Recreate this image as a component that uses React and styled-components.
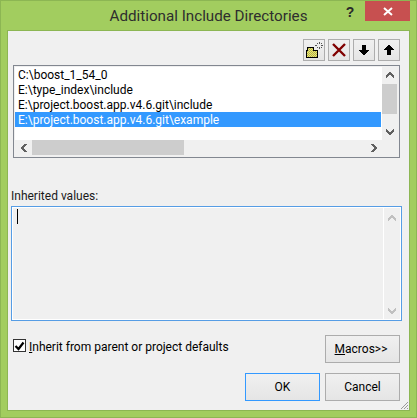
import React from "react";
import styled, { createGlobalStyle } from "styled-components";

const Global = createGlobalStyle`
  html, body { margin: 0; padding: 0; background: #a2cd5f; }
  * { box-sizing: border-box; }
`;

const Win = styled.div`
  width: 417px; height: 418px; background: #a2cd5f;
  border: 1px solid #8cb653;
  display: flex; flex-direction: column;
  font-family: Roboto, "Open Sans", sans-serif;
  font-size: 12px; color: #000;
`;
const TitleBar = styled.div`
  height: 29px; flex: none; position: relative;
  display: flex; justify-content: center; align-items: center;
`;
const Title = styled.div`
  font-size: 15.2px; color: #2e2e2e; padding-top: 1px;
`;
const WindowControls = styled.div`
  position: absolute; top: 0; right: 6px; height: 20px;
  display: flex; align-items: flex-start;
`;
const Help = styled.div`
  width: 30px; height: 20px; font: bold 14px/22px "Liberation Sans", sans-serif;
  color: #2a2a2a; text-align: center;
`;
const Close = styled.div`
  width: 45px; height: 20px; background: #c75050;
  display: flex; align-items: center; justify-content: center;
`;
const Client = styled.div`
  margin: 0 6px 6px 6px; flex: 1; min-height: 0;
  background: #f0f0f0; border: 1px solid #8cb653;
  padding: 8px 9px 0 5px;
  display: flex; flex-direction: column; position: relative;
`;
const Toolbar = styled.div`
  display: flex; justify-content: flex-end; gap: 3px; height: 22px; flex: none;
`;
const ToolBtn = styled.div`
  width: 22px; height: 22px; border: 1px solid #adadad;
  background: linear-gradient(#f0f0f0, #e5e5e5);
  display: flex; align-items: center; justify-content: center;
`;
const List = styled.div`
  margin-top: 4px; height: 93px; border: 1px solid #828790; flex: none;
  display: grid; grid-template-columns: 1fr 15px; grid-template-rows: 73px 16px;
  padding: 1px 2px 1px 1px; background: #f0f0f0;
`;
const Rows = styled.div`
  background: #fff; padding-right: 1px; overflow: hidden; grid-column: 1; grid-row: 1;
`;
const Row = styled.div`
  height: 15px; line-height: 17px; padding-left: 3px; white-space: nowrap;
  background: ${p => (p.$sel ? "#3399ff" : "transparent")};
  color: ${p => (p.$sel ? "#fff" : "#000")};
`;
const VScroll = styled.div`
  grid-column: 2; grid-row: 1; background: #f0f0f0; width: 15px;
  display: flex; flex-direction: column; align-items: center; justify-content: space-between;
  position: relative;
`;
const VThumb = styled.div`
  position: absolute; left: 0; top: 17px; width: 15px; height: 30px; background: #cdcdcd;
`;
const Arrow = styled.div`
  height: 16px; width: 17px; display: flex; align-items: center; justify-content: center;
`;
const HScroll = styled.div`
  grid-column: 1; grid-row: 2; display: flex; align-items: center; justify-content: space-between;
  position: relative;
`;
const HThumb = styled.div`
  position: absolute; left: 17px; top: 0; height: 15px; width: 152px; background: #cdcdcd;
`;
const Label = styled.div`
  margin-top: 29px; height: 16px; line-height: 18px; flex: none; margin-left: -2px; color: #1a1a1a;
`;
const Inherited = styled.div`
  margin-top: 3px; margin-left: -2px; height: 115px; width: 391px; flex: none;
  border: 1px solid #569de5; background: #f0f0f0; position: relative;
  box-shadow: inset 0 1px 0 #fff, inset 1px 0 0 #fff, inset 0 -1px 0 #fff, inset -1px 0 0 #fff;
  display: flex; justify-content: flex-end;
`;
const Caret = styled.div`
  position: absolute; left: 5px; top: 2px; width: 1px; height: 15px; background: #000;
`;
const DisabledBar = styled.div`
  width: 17px; margin: 1px; border-left: 1px solid #fff;
  display: flex; flex-direction: column; justify-content: space-between; align-items: center;
  padding: 7px 0 5px;
`;
const MacroRow = styled.div`
  margin-top: 14px; display: flex; justify-content: space-between; align-items: flex-start;
  height: 28px; flex: none;
`;
const CheckLabel = styled.label`
  display: flex; align-items: center; gap: 3px; height: 13px; margin-top: 4px;
`;
const CheckBox = styled.span`
  width: 13px; height: 13px; border: 1px solid #333; background: #fff;
  display: flex; align-items: center; justify-content: center;
`;
const CheckText = styled.span`
  padding-top: 2px; line-height: 14px;
`;
const Key = styled.span`
  text-decoration: underline; text-underline-offset: 1px;
`;
const Button = styled.div`
  width: 75px; height: 28px; flex: none;
  border: 1px solid ${p => (p.$def ? "#3399ff" : "#acacac")};
  background: linear-gradient(#f0f0f0, #e5e5e5);
  display: flex; align-items: center; justify-content: center;
  padding-right: ${p => p.$nudge || 0}px;
`;
const Footer = styled.div`
  margin-top: 10px; display: flex; justify-content: flex-end; gap: 5px; flex: none;
`;
const Grip = styled.svg`
  position: absolute; right: 0; bottom: 0;
`;

const Chevron = ({ rot = 0, color = "#606060" }) => (
  <svg width="8" height="6" viewBox="0 0 8 6" style={{ transform: `rotate(${rot}deg)` }} shapeRendering="crispEdges">
    <path d="M3 0h2v1h1v1h1v1h1v3H7V5H6V4H5V3H3v1H2v1H1v1H0V3h1V2h1V1h1z" fill={color} />
  </svg>
);

export default function App() {
  return (
    <>
      <Global />
      <Win>
        <TitleBar>
          <Title>Additional Include Directories</Title>
          <WindowControls>
            <Help>?</Help>
            <Close>
              <svg width="10" height="9" viewBox="0 0 10 9">
                <path d="M1 1l8 7M9 1L1 8" stroke="#fff" strokeWidth="2" />
              </svg>
            </Close>
          </WindowControls>
        </TitleBar>
        <Client>
          <Toolbar>
            <ToolBtn>
              <svg width="18" height="18" viewBox="0 0 18 18" shapeRendering="crispEdges">
                <defs>
                  <pattern id="dither" width="2" height="2" patternUnits="userSpaceOnUse">
                    <rect width="2" height="2" fill="#f6f060" />
                    <rect width="1" height="1" fill="#a8a860" />
                    <rect x="1" y="1" width="1" height="1" fill="#a8a860" />
                  </pattern>
                </defs>
                <path d="M1.500 9.500h1v-3h6v3h3.500v6.500h-10.500z" fill="url(#dither)" stroke="#000" />
                <path d="M14 1h1v2h-1zM14 6h1v2h-1zM10 4h2v1h-2zM16 4h2v1h-2zM12 2h1v1h-1zM16 2h1v1h-1zM12 6h1v1h-1zM16 6h1v1h-1z" fill="#555" />
              </svg>
            </ToolBtn>
            <ToolBtn>
              <svg width="14" height="14" viewBox="0 0 14 14">
                <path d="M1 1l12 12M13 1L1 13" stroke="#800000" strokeWidth="2.400" />
              </svg>
            </ToolBtn>
            <ToolBtn>
              <svg width="10" height="10" viewBox="0 0 10 10" shapeRendering="crispEdges">
                <path d="M3 0h4v5h3v1H9v1H8v1H7v1H6v1H4V9H3V8H2V7H1V6H0V5h3z" fill="#000" />
              </svg>
            </ToolBtn>
            <ToolBtn>
              <svg width="10" height="10" viewBox="0 0 10 10" shapeRendering="crispEdges">
                <path d="M3 10h4V5h3V4H9V3H8V2H7V1H6V0H4v1H3v1H2v1H1v1H0v1h3z" fill="#000" />
              </svg>
            </ToolBtn>
          </Toolbar>
          <List>
            <Rows>
              <Row>C:\boost_1_54_0</Row>
              <Row>E:\type_index\include</Row>
              <Row>E:\project.boost.app.v4.6.git\include</Row>
              <Row $sel>E:\project.boost.app.v4.6.git\example</Row>
            </Rows>
            <VScroll>
              <VThumb />
              <Arrow><Chevron /></Arrow>
              <Arrow><Chevron rot={180} /></Arrow>
            </VScroll>
            <HScroll>
              <HThumb />
              <Arrow><Chevron rot={-90} /></Arrow>
              <Arrow><Chevron rot={90} /></Arrow>
            </HScroll>
          </List>
          <Label>Inherited values:</Label>
          <Inherited>
            <Caret />
            <DisabledBar>
              <Chevron color="#c0c0c0" />
              <Chevron rot={180} color="#c0c0c0" />
            </DisabledBar>
          </Inherited>
          <MacroRow>
            <CheckLabel>
              <CheckBox>
                <svg width="11" height="10" viewBox="0 0 11 10">
                  <path d="M1.500 5l3 3L9.500 1.500" stroke="#000" strokeWidth="2.200" fill="none" />
                </svg>
              </CheckBox>
              <CheckText><Key>I</Key>nherit from parent or project defaults</CheckText>
            </CheckLabel>
            <Button $nudge={3}><span><Key>M</Key>acros&gt;&gt;</span></Button>
          </MacroRow>
          <Footer>
            <Button $def>OK</Button>
            <Button>Cancel</Button>
          </Footer>
          <Grip width="9" height="9" viewBox="0 0 9 9">
            <path d="M8 1L1 8M8 4L4 8M8 7L7 8" stroke="#999" strokeWidth="1" />
          </Grip>
        </Client>
      </Win>
    </>
  );
}
